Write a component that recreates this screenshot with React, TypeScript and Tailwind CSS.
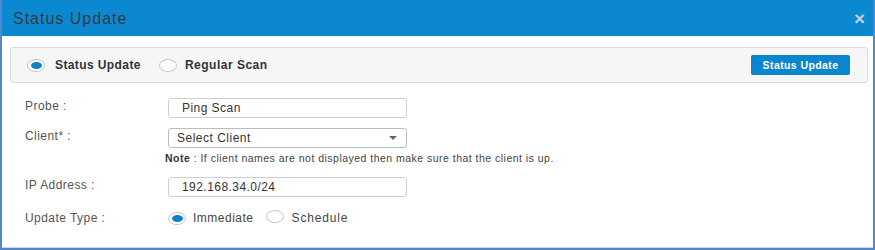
import React from "react";

function Radio({ checked }: { checked?: boolean }) {
  return (
    <span className="relative inline-flex items-center justify-center w-[18px] h-[13px] rounded-[50%] border border-[#c4c4c4] bg-white shrink-0">
      {checked && <span className="block w-[11px] h-[7px] rounded-[50%] bg-[#0a82cc]" />}
    </span>
  );
}

export default function App() {
  return (
    <div className="w-[875px] h-[250px] bg-white border-x-2 border-b-2 border-[#5088d0] flex flex-col font-['Liberation_Sans',Arial,sans-serif] overflow-hidden">
      {/* Header */}
      <div className="h-[36px] shrink-0 bg-[#0a88d0] flex items-center justify-between pl-[11px] pr-[8px]">
        <span className="text-[16px] tracking-[1px] text-[#2f3b46] leading-none mt-[1px]">Status Update</span>
        <span className="text-[19px] font-bold text-[#c3cfda] leading-none">×</span>
      </div>

      {/* Body */}
      <div className="flex-1 flex flex-col border-b border-[#d6d6d6]">
        {/* Panel */}
        <div className="mt-[11px] ml-[8px] mr-[5px] h-[36px] shrink-0 bg-[#f6f6f6] border border-[#dcdcdc] rounded-[3px] flex items-center pl-[16px] pr-[17px]">
          <div className="flex items-center">
            <Radio checked />
            <span className="ml-[10px] text-[12px] font-bold tracking-[0.4px] text-[#333]">Status Update</span>
          </div>
          <div className="flex items-center ml-[18px]">
            <Radio />
            <span className="ml-[8px] text-[12px] font-bold tracking-[0.5px] text-[#333]">Regular Scan</span>
          </div>
          <button className="ml-auto h-[20px] w-[99px] bg-[#0a86cf] rounded-[2px] text-white text-[10.5px] font-bold tracking-[0.4px] leading-none">
            Status Update
          </button>
        </div>

        {/* Form */}
        <div className="pl-[23px] flex flex-col">
          <div className="mt-[15px] flex items-start">
            <span className="w-[143px] mt-[1px] text-[12px] tracking-[0.45px] leading-[14px] text-[#555]">Probe :</span>
            <div className="w-[239px] h-[20px] border border-[#cfcfcf] rounded-[3px] flex items-center pl-[13px] text-[12px] tracking-[0.45px] text-[#333]">
              Ping Scan
            </div>
          </div>

          <div className="mt-[10px] flex items-start">
            <span className="w-[143px] mt-[1px] text-[12px] tracking-[0.45px] leading-[14px] text-[#555]">Client* :</span>
            <div className="w-[239px] h-[20px] border border-[#bdbdbd] rounded-[3px] flex items-center pl-[8px] pr-[9px] text-[12px] tracking-[0.5px] text-[#333]">
              <span>Select Client</span>
              <svg className="ml-auto" width="8" height="4" viewBox="0 0 8 4">
                <path d="M0 0 L8 0 L4 4 Z" fill="#666" />
              </svg>
            </div>
          </div>

          <div className="mt-[4px] pl-[140px] h-[12px] leading-[12px] text-[10.5px] tracking-[0.48px] text-[#444] whitespace-nowrap">
            <span className="font-bold text-[#333]">Note</span> : If client names are not displayed then make sure that the client is up.
          </div>

          <div className="mt-[13px] flex items-start">
            <span className="w-[143px] mt-[1px] text-[12px] tracking-[0.45px] leading-[14px] text-[#555]">IP Address :</span>
            <div className="w-[239px] h-[20px] border border-[#cfcfcf] rounded-[3px] flex items-center pl-[13px] text-[12px] tracking-[0.45px] text-[#333]">
              192.168.34.0/24
            </div>
          </div>

          <div className="mt-[14px] flex items-center h-[14px]">
            <span className="w-[143px] text-[12px] tracking-[0.45px] leading-[14px] text-[#555]">Update Type :</span>
            <Radio checked />
            <span className="ml-[7px] text-[12px] tracking-[0.5px] text-[#444]">Immediate</span>
            <span className="ml-[12px]"><Radio /></span>
            <span className="ml-[8px] text-[12px] tracking-[0.85px] text-[#444]">Schedule</span>
          </div>
        </div>
      </div>
    </div>
  );
}
